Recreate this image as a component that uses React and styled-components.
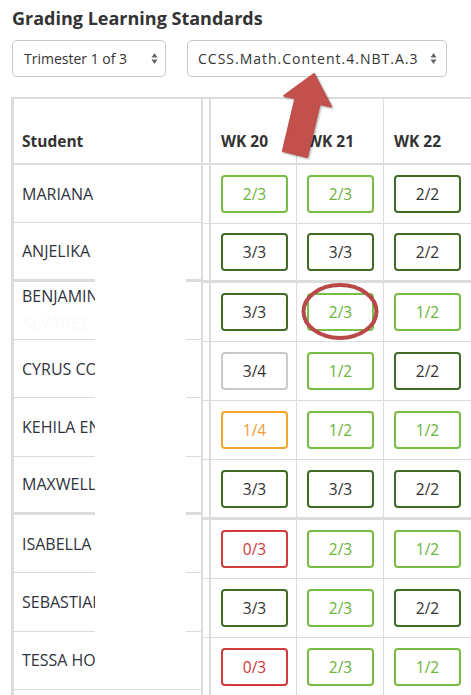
import React from 'react'
import styled, { createGlobalStyle } from 'styled-components'

const GlobalStyle = createGlobalStyle`
    html, body {
        margin: 0;
        padding: 0;
        background: #ffffff;
        overflow: hidden;
    }
    body {
        font-family: "Open Sans", "Liberation Sans", sans-serif;
        color: #333333;
    }
`

const colors = {
    light: { border: '#77bd45', text: '#6bb23a' },
    dark: { border: '#3f6b25', text: '#333333' },
    gray: { border: '#c9c9c9', text: '#333333' },
    orange: { border: '#f6a52c', text: '#f19a36' },
    red: { border: '#d23b3b', text: '#cf3a3a' },
}

const Page = styled.div`
    position: relative;
    width: 471px;
    height: 695px;
    overflow: hidden;
    padding-left: 11px;
    box-sizing: border-box;
`

const Title = styled.h1`
    margin: 6px 0 0 1px;
    font-size: 18px;
    line-height: 24px;
    font-weight: 700;
    color: #333333;
`

const Toolbar = styled.div`
    display: flex;
    gap: 21px;
    margin: 10px 0 0 1px;
`

const SelectBox = styled.div`
    display: flex;
    align-items: center;
    justify-content: space-between;
    box-sizing: border-box;
    width: ${({ $width }) => $width}px;
    height: 37px;
    padding: 0 ${({ $right }) => $right}px 0 ${({ $left }) => $left}px;
    border: 1px solid #c8c8c8;
    border-radius: 5px;
    font-size: 14px;
    letter-spacing: ${({ $spacing }) => $spacing || 0}px;
    color: #333;
    white-space: nowrap;
`

const Grid = styled.div`
    display: flex;
    margin-top: 20px;
`

const StudentPanel = styled.div`
    position: relative;
    flex: 0 0 auto;
    width: 192px;
    box-sizing: border-box;
    border-left: 3px solid #dcdcdc;
    border-right: 2px solid #dcdcdc;
    border-top: 2px solid #dcdcdc;
`

const WeekPanel = styled.div`
    flex: 1 1 auto;
    border-top: 2px solid #dcdcdc;
`

const columns = '6px 88px 87px 92px 87px'

const HeadRow = styled.div`
    height: 64px;
    border-bottom: 2px solid #dcdcdc;
    display: ${({ $grid }) => ($grid ? 'grid' : 'flex')};
    grid-template-columns: ${columns};
    align-items: end;
`

const HeadLabel = styled.div`
    font-size: 15.5px;
    font-weight: 700;
    line-height: 20px;
    padding: 0 0 12px ${({ $pad }) => $pad}px;
    height: 100%;
    box-sizing: border-box;
    display: flex;
    align-items: flex-end;
    white-space: nowrap;
    border-left: ${({ $first }) => ($first ? '2px solid #dcdcdc' : 'none')};
    border-right: ${({ $week }) => ($week ? '1px solid #dcdcdc' : 'none')};
`

const NameRow = styled.div`
    height: 58.33px;
    box-sizing: border-box;
    border-bottom: ${({ $thick }) => ($thick ? '3px' : '1px')} solid #dcdcdc;
    display: flex;
    flex-direction: column;
    justify-content: center;
    padding-left: 8px;
    font-size: 16px;
    line-height: ${({ $wrap }) => ($wrap ? '27px' : '20px')};
    white-space: nowrap;
    color: #2f3340;
`

const Ghost = styled.span`
    color: #fafafa;
`

const Redaction = styled.div`
    position: absolute;
    left: 81px;
    top: 124px;
    width: 91px;
    height: 465px;
    background: #ffffff;
`

const WeekRow = styled.div`
    height: 59.1px;
    box-sizing: border-box;
    border-bottom: ${({ $thick }) => ($thick ? '3px' : '1px')} solid #dcdcdc;
    display: grid;
    grid-template-columns: ${columns};
`

const Cell = styled.div`
    display: flex;
    align-items: center;
    padding-left: 10px;
    border-right: 1px solid #dcdcdc;
    border-left: ${({ $first }) => ($first ? '2px solid #dcdcdc' : 'none')};
`

const Badge = styled.div`
    width: 67px;
    height: 38px;
    box-sizing: border-box;
    border: 2px solid ${({ $tone }) => colors[$tone].border};
    border-radius: 4px;
    color: ${({ $tone }) => colors[$tone].text};
    font-size: 15.5px;
    display: flex;
    align-items: center;
    justify-content: center;
`

const Overlay = styled.svg`
    position: absolute;
    left: ${({ $x }) => $x}px;
    top: ${({ $y }) => $y}px;
    overflow: visible;
`

const students = [
    { name: 'MARIANA', scores: [['2/3', 'light'], ['2/3', 'light'], ['2/2', 'dark']] },
    { name: 'ANJELIKA CRUZ', scores: [['3/3', 'dark'], ['3/3', 'dark'], ['2/2', 'dark']], thick: true },
    { name: 'BENJAMIN', extra: 'ALVAREZ', scores: [['3/3', 'dark'], ['2/3', 'light'], ['1/2', 'light']] },
    { name: 'CYRUS COLE', scores: [['3/4', 'gray'], ['1/2', 'light'], ['2/2', 'dark']] },
    { name: 'KEHILA ENNIS', scores: [['1/4', 'orange'], ['1/2', 'light'], ['1/2', 'light']] },
    { name: 'MAXWELL REED', scores: [['3/3', 'dark'], ['3/3', 'dark'], ['2/2', 'dark']], thick: true },
    { name: 'ISABELLA LOPEZ', scores: [['0/3', 'red'], ['2/3', 'light'], ['1/2', 'light']] },
    { name: 'SEBASTIAN MORA', scores: [['3/3', 'dark'], ['2/3', 'light'], ['2/2', 'dark']] },
    { name: 'TESSA HOLT', scores: [['0/3', 'red'], ['2/3', 'light'], ['1/2', 'light']] },
    { name: '', scores: [] },
]

const weeks = ['WK 20', 'WK 21', 'WK 22']

function UpDown() {
    return (
        <svg width="7" height="13" viewBox="0 0 7 13">
            <path d="M0.5 5.5 L3.5 1 L6.5 5.5 Z M0.5 7.5 L3.5 12 L6.5 7.5 Z" fill="#666" />
        </svg>
    )
}

function App() {
    return (
        <Page>
            <GlobalStyle />
            <Title>Grading Learning Standards</Title>
            <Toolbar>
                <SelectBox $width={154} $left={11} $right={7}>
                    Trimester 1 of 3 <UpDown />
                </SelectBox>
                <SelectBox $width={260} $left={10} $right={9} $spacing={1}>
                    CCSS.Math.Content.4.NBT.A.3 <UpDown />
                </SelectBox>
            </Toolbar>
            <Grid>
                <StudentPanel>
                    <HeadRow>
                        <HeadLabel $pad={8}>Student</HeadLabel>
                    </HeadRow>
                    {students.map((s, i) => (
                        <NameRow key={i} $thick={s.thick} $wrap={!!s.extra}>
                            <span>{s.name}</span>
                            {s.extra && <Ghost>{s.extra}</Ghost>}
                        </NameRow>
                    ))}
                    <Redaction />
                </StudentPanel>
                <WeekPanel>
                    <HeadRow $grid>
                        <div />
                        {weeks.map((w, i) => (
                            <HeadLabel key={w} $pad={10} $week $first={i === 0}>{w}</HeadLabel>
                        ))}
                    </HeadRow>
                    {students.map((s, i) => (
                        <WeekRow key={i} $thick={s.thick}>
                            <div />
                            {s.scores.map(([v, tone], j) => (
                                <Cell key={j} $first={j === 0}>
                                    <Badge $tone={tone}>{v}</Badge>
                                </Cell>
                            ))}
                        </WeekRow>
                    ))}
                </WeekPanel>
            </Grid>

            {/* annotation: arrow */}
            <Overlay $x={270} $y={60} width="70" height="110" viewBox="270 60 70 110">
                <polygon
                    points="314,74 331,106.5 319.6,104 307.1,157 282.9,151 295.4,98.3 284.2,95.7"
                    fill="#c2504c"
                    stroke="#c2504c"
                    strokeWidth="2"
                    strokeLinejoin="round"
                    style={{ filter: 'drop-shadow(1px 1px 1px rgba(0,0,0,0.35))' }}
                />
            </Overlay>

            {/* annotation: circle */}
            <Overlay $x={300} $y={281} width="80" height="62" viewBox="300 281 80 62">
                <ellipse cx="340" cy="311.5" rx="36.5" ry="26.5" fill="none" stroke="#b9484a" strokeWidth="4" />
            </Overlay>
        </Page>
    )
}

export default App
